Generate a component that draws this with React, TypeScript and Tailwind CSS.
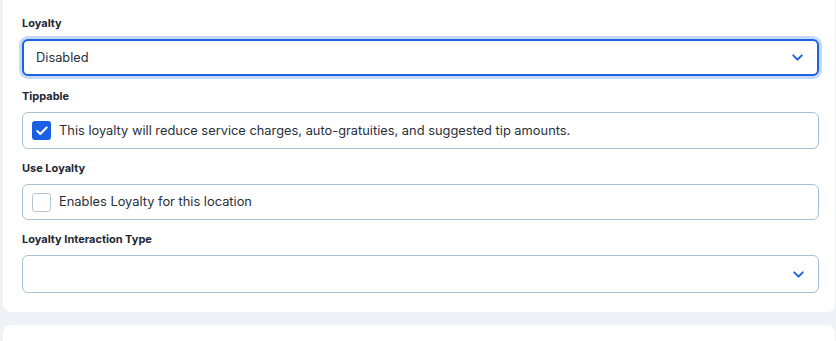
import { ChevronDown, Check } from "lucide-react";

const font = { fontFamily: "Inter, 'Noto Sans', sans-serif" };

function Label({ children }: { children: React.ReactNode }) {
  return (
    <div className="h-[16px] mb-[8px] text-[11px] leading-[16px] font-bold text-[#1e2733]">
      {children}
    </div>
  );
}

function Select({ value, focused, h = "h-[37px]" }: { value?: string; focused?: boolean; h?: string }) {
  return (
    <div
      className={`${h} mb-[12px] flex items-center justify-between rounded-[6px] bg-white pr-[11px] ${
        focused
          ? "border-2 border-[#1b62e0] pl-[12px] ring-[3px] ring-[#c7d9f8]"
          : "border border-[#a9c1d5] pl-[13px]"
      }`}
    >
      <span className="text-[12.85px] text-[#27303b]">{value}</span>
      <ChevronDown className="h-[17px] w-[17px] text-[#1b62e0]" strokeWidth={2.75} />
    </div>
  );
}

function CheckRow({ checked, text, h = "h-[37px]" }: { checked?: boolean; text: string; h?: string }) {
  return (
    <div className={`${h} mb-[11px] flex items-center gap-[8px] rounded-[6px] border border-[#a9c1d5] bg-white pl-[9px]`}>
      {checked ? (
        <div className="h-[19px] w-[19px] rounded-[3px] bg-[#1b5fe3] flex items-center justify-center">
          <Check className="h-[14px] w-[14px] text-white" strokeWidth={3.5} />
        </div>
      ) : (
        <div className="h-[19px] w-[19px] rounded-[3px] border border-[#b9c6d2] bg-white" />
      )}
      <span className="text-[12.85px] text-[#27303b]">{text}</span>
    </div>
  );
}

export default function App() {
  return (
    <main className="h-[341px] w-[836px] overflow-hidden bg-[#eef1f6]" style={font}>
      <div className="ml-[3px] mr-[1px] -mt-[10px] rounded-b-[8px] bg-white pl-[19px] pr-[16px] pt-[25px] pb-[7px]">
        <Label>Loyalty</Label>
        <Select value="Disabled" focused />
        <Label>Tippable</Label>
        <CheckRow
          checked
          text="This loyalty will reduce service charges, auto-gratuities, and suggested tip amounts."
        />
        <Label>Use Loyalty</Label>
        <CheckRow text="Enables Loyalty for this location" h="h-[36px]" />
        <Label>Loyalty Interaction Type</Label>
        <Select h="h-[38px]" />
      </div>
      <div className="ml-[3px] mr-[1px] mt-[13px] h-[40px] rounded-t-[8px] bg-white" />
    </main>
  );
}
